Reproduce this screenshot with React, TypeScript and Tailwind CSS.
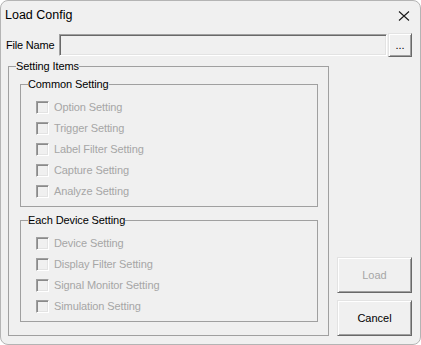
import React from "react";

const commonItems = [
  "Option Setting",
  "Trigger Setting",
  "Label Filter Setting",
  "Capture Setting",
  "Analyze Setting",
];

const deviceItems = [
  "Device Setting",
  "Display Filter Setting",
  "Signal Monitor Setting",
  "Simulation Setting",
];

const CheckRow = ({ label }: { label: string }) => (
  <label className="flex items-center h-[21px] gap-[5px] text-[#a6a6a6]">
    <span className="w-[13px] h-[13px] border border-t-[#a0a0a0] border-l-[#a0a0a0] border-b-white border-r-white shadow-[inset_1px_1px_0_#8a8a8a,inset_-1px_-1px_0_#e3e3e3] bg-[#f0f0f0]" />
    <span className="tracking-[-0.1px]">{label}</span>
  </label>
);

const GroupBox = ({
  title,
  className,
  children,
}: {
  title: string;
  className: string;
  children: React.ReactNode;
}) => (
  <fieldset className={`border border-[#a0a0a0] ${className}`}>
    <legend className="ml-[7px] leading-[13px] tracking-[-0.1px] text-black">
      {title}
    </legend>
    {children}
  </fieldset>
);

const WinButton = ({
  children,
  disabled,
  className,
}: {
  children: React.ReactNode;
  disabled?: boolean;
  className: string;
}) => (
  <button
    className={`flex items-center justify-center bg-[#f0f0f0] border border-t-[#e3e3e3] border-l-[#e3e3e3] border-b-[#696969] border-r-[#696969] shadow-[inset_1px_1px_0_#ffffff,inset_-1px_-1px_0_#a0a0a0] ${
      disabled ? "text-[#a6a6a6]" : "text-black"
    } ${className}`}
  >
    {children}
  </button>
);

const App = () => {
  return (
    <div className="w-[421px] h-[345px] bg-white">
      <div
        className="w-[421px] h-[345px] border border-[#b4b4b4] rounded-[8px] bg-[#f0f0f0] overflow-hidden flex flex-col text-[11px]"
        style={{ fontFamily: '"Liberation Sans", Arial, sans-serif' }}
      >
        {/* title bar */}
        <div className="h-[28px] flex items-center justify-between pl-[4px] pr-[10px]">
          <span className="text-[12.5px] text-black pt-[1px]">Load Config</span>
          <svg width="12" height="12" viewBox="0 0 12 12" className="mt-[1px]">
            <path d="M1 1.5 L11 10.5 M11 1.5 L1 10.5" stroke="#1a1a1a" strokeWidth="1.1" fill="none" />
          </svg>
        </div>

        {/* file name row */}
        <div className="mt-[4px] h-[24px] flex items-center">
          <span className="pl-[5px] w-[58px] tracking-[-0.2px] text-black">File Name</span>
          <div className="w-[328px] h-[22px] border border-t-[#a0a0a0] border-l-[#a0a0a0] border-b-white border-r-white shadow-[inset_1px_1px_0_#696969,inset_-1px_-1px_0_#e3e3e3] bg-[#f0f0f0]" />
          <WinButton className="ml-[1px] w-[24px] h-[24px] text-[11px]">...</WinButton>
        </div>

        {/* body */}
        <div className="mt-[3px] flex items-end">
          <GroupBox title="Setting Items" className="ml-[7px] w-[321px] h-[276px]">
            <GroupBox title="Common Setting" className="mt-[5px] ml-[11px] w-[298px] h-[129px]">
              <div className="pt-[6px] pl-[15px] flex flex-col">
                {commonItems.map((item) => (
                  <CheckRow key={item} label={item} />
                ))}
              </div>
            </GroupBox>
            <GroupBox title="Each Device Setting" className="mt-[7px] ml-[11px] w-[298px] h-[108px]">
              <div className="pt-[6px] pl-[15px] flex flex-col">
                {deviceItems.map((item) => (
                  <CheckRow key={item} label={item} />
                ))}
              </div>
            </GroupBox>
          </GroupBox>

          <div className="ml-[8px] flex flex-col gap-[7px]">
            <WinButton disabled className="w-[75px] h-[36px]">
              Load
            </WinButton>
            <WinButton className="w-[75px] h-[36px]">Cancel</WinButton>
          </div>
        </div>
      </div>
    </div>
  );
};

export default App;
